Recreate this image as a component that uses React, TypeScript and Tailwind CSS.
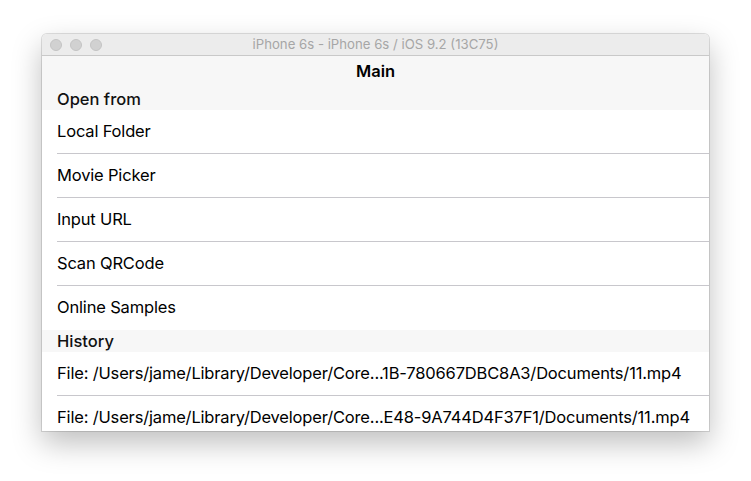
import React from "react";

const font = { fontFamily: "Inter, 'Noto Sans', 'Liberation Sans', sans-serif" };

function Row({ text, sep = true }: { text: string; sep?: boolean }) {
  return (
    <div className="relative h-[44px] flex items-center bg-white pl-[15px] shrink-0">
      <span className="text-[16.5px] text-black tracking-[-0.17px] whitespace-nowrap -mt-[1px]">{text}</span>
      {sep && <div className="absolute left-[15px] right-0 bottom-0 h-px bg-[#c8c7cc]" />}
    </div>
  );
}

function Header({ text }: { text: string }) {
  return (
    <div className="h-[22px] flex items-center bg-[#f7f7f7] pl-[15px] shrink-0">
      <span className="text-[16.5px] font-medium text-[#111] mt-[1px]">{text}</span>
    </div>
  );
}

export default function App() {
  return (
    <div className="w-[751px] h-[481px] bg-white overflow-hidden" style={font}>
      <div className="ml-[42px] mt-[34px] w-[667px] h-[397px] rounded-t-[5px] overflow-hidden bg-white flex flex-col shadow-[0_12px_30px_rgba(0,0,0,0.26),0_0_0_1px_rgba(0,0,0,0.12)]">
        <div className="relative h-[22px] shrink-0 bg-[#ececec] border-b border-[#c9c9c9] flex items-center justify-center">
          <div className="absolute left-[8px] top-[5px] flex gap-[8px]">
            <div className="w-[12px] h-[12px] rounded-full bg-[#d1d1d1] border border-[#c4c4c4]" />
            <div className="w-[12px] h-[12px] rounded-full bg-[#d1d1d1] border border-[#c4c4c4]" />
            <div className="w-[12px] h-[12px] rounded-full bg-[#d1d1d1] border border-[#c4c4c4]" />
          </div>
          <span className="text-[13.2px] text-[#a6a6a6]">iPhone 6s - iPhone 6s / iOS 9.2 (13C75)</span>
        </div>
        <div className="h-[32px] shrink-0 bg-[#f7f7f7] flex items-center justify-center">
          <span className="text-[16.5px] font-semibold text-black -mt-[1px]">Main</span>
        </div>
        <div className="flex flex-col flex-1 overflow-hidden">
          <Header text="Open from" />
          <Row text="Local Folder" />
          <Row text="Movie Picker" />
          <Row text="Input URL" />
          <Row text="Scan QRCode" />
          <Row text="Online Samples" sep={false} />
          <Header text="History" />
          <Row text="File: /Users/jame/Library/Developer/Core...1B-780667DBC8A3/Documents/11.mp4" />
          <Row text="File: /Users/jame/Library/Developer/Core...E48-9A744D4F37F1/Documents/11.mp4" />
        </div>
      </div>
    </div>
  );
}
